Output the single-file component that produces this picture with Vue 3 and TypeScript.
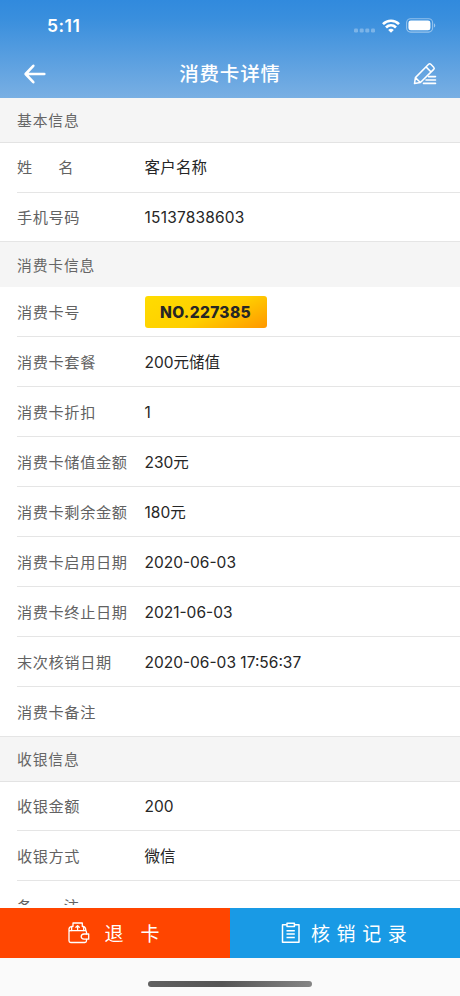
<script setup lang="ts">
interface Field {
  label: string
  value?: string
  kind?: 'badge' | 'wide'
  split?: 'name' | 'note'
}
interface Section {
  id: string
  title: string
  fields: Field[]
}

const sections: Section[] = [
  {
    id: 'basic',
    title: '基本信息',
    fields: [
      { label: '姓名', value: '客户名称', split: 'name', kind: 'wide' },
      { label: '手机号码', value: '15137838603', kind: 'wide' },
    ],
  },
  {
    id: 'card',
    title: '消费卡信息',
    fields: [
      { label: '消费卡号', value: 'NO.227385', kind: 'badge' },
      { label: '消费卡套餐', value: '200元储值' },
      { label: '消费卡折扣', value: '1' },
      { label: '消费卡储值金额', value: '230元' },
      { label: '消费卡剩余金额', value: '180元' },
      { label: '消费卡启用日期', value: '2020-06-03' },
      { label: '消费卡终止日期', value: '2021-06-03' },
      { label: '末次核销日期', value: '2020-06-03 17:56:37' },
      { label: '消费卡备注' },
    ],
  },
  {
    id: 'cashier',
    title: '收银信息',
    fields: [
      { label: '收银金额', value: '200' },
      { label: '收银方式', value: '微信' },
      { label: '备注', split: 'note' },
    ],
  },
]
</script>

<template>
  <div class="screen">
    <header class="top">
      <div class="status">
        <span class="time">5:11</span>
        <div class="indicators">
          <svg class="dots" width="21" height="5" viewBox="0 0 21 5" fill="#fff" fill-opacity=".3">
            <rect x="0" y="0.5" width="4" height="4" rx="1.2" />
            <rect x="5.7" y="0.5" width="4" height="4" rx="1.2" />
            <rect x="11.3" y="0.5" width="4" height="4" rx="1.2" />
            <rect x="17" y="0.5" width="4" height="4" rx="1.2" />
          </svg>
          <svg class="wifi" width="18" height="14" viewBox="0 0 18 14" fill="none" stroke="#fff" stroke-width="2.7">
            <path d="M1 5.1C5.6.6 12.4.6 17 5.1" />
            <path d="M4 8.5c2.9-2.8 7.1-2.8 10 0" />
            <path d="M9 13.7 6.2 10.9c1.6-1.5 4-1.5 5.6 0z" fill="#fff" stroke="none" />
          </svg>
          <svg class="battery" width="30" height="15" viewBox="0 0 30 15">
            <rect x="0.6" y="0.7" width="26" height="13.4" rx="4" fill="none" stroke="#fff" stroke-opacity=".45" stroke-width="1.1" />
            <rect x="2.4" y="2.5" width="22" height="9.8" rx="2.4" fill="#fff" />
            <path d="M28 5.2c1.7.7 1.7 3.7 0 4.4z" fill="#fff" fill-opacity=".5" />
          </svg>
        </div>
      </div>
      <nav class="nav">
        <svg class="back" width="24" height="22" viewBox="0 0 24 22" fill="none" stroke="#fff" stroke-width="2.6" stroke-linecap="round" stroke-linejoin="round">
          <path d="M10.3 2.8 2.6 11l7.7 8.2M2.8 11h18.500" />
        </svg>
        <h1>消费卡详情</h1>
        <svg class="edit" width="24" height="24" viewBox="0 0 24 24" fill="none" stroke="#fff" stroke-width="1.5" stroke-linejoin="round" stroke-linecap="round">
          <path d="M1.5 21.5 2.4 15.6 15.6 2.3Q16.7 1.2 17.8 2.3L20.7 5.2Q21.8 6.3 20.7 7.4L7.4 20.5ZM2.4 15.6 7.4 20.5M13 4.9l5.100 5.100" />
          <path d="M15.5 14.6h7M13 18h9.5M10.5 21.4h12" stroke-width="1.6" />
        </svg>
      </nav>
    </header>

    <main class="content">
      <section v-for="s in sections" :key="s.id" :class="['section', s.id]">
        <h2>{{ s.title }}</h2>
        <dl>
          <div v-for="f in s.fields" :key="f.label" class="row">
            <dt :class="f.split"><template v-if="f.split"><span>{{ f.label[0] }}</span><span>{{ f.label[1] }}</span></template><template v-else>{{ f.label }}</template></dt>
            <dd><span v-if="f.value" :class="f.kind">{{ f.value }}</span></dd>
          </div>
        </dl>
      </section>
    </main>

    <footer class="bottom">
      <div class="actions">
        <button class="refund">
          <svg width="22" height="22" viewBox="0 0 22 22" fill="none" stroke="#fff" stroke-width="1.3" stroke-linejoin="round" stroke-linecap="round">
            <path d="M18.5 12V10Q18.5 8.6 17 8.6H2.6Q1 8.6 1 10V18.8Q1 20.5 2.7 20.5H16.8Q18.5 20.5 18.5 18.8V17.5M1 10V7.3Q1 4.8 3.6 4.6M15.7 4.6Q17.8 5 17.8 8.6" />
            <path d="M3.6 8.5V4.5H5V1H14.3V4.5H15.7V8.5M9.6 7.6V3.8M7.9 5.3 9.6 3.6 11.3 5.3" />
            <path d="M20.7 12H16Q13.2 12.2 13.2 14.6T16 17.2H20.7Z" />
          </svg>
          <span>退<i></i>卡</span>
        </button>
        <button class="record">
          <svg width="20" height="22" viewBox="0 0 20 22" fill="none" stroke="#fff" stroke-width="1.5" stroke-linejoin="round">
            <path d="M5.8 2.8H1.5V20.2H18V2.8H13.5" />
            <path d="M6 1.2H13.4V4.5H6ZM5.5 8.8H13.8M5.5 12.1H13.8M5.5 15.4H13.8" />
          </svg>
          <span>核销记录</span>
        </button>
      </div>
      <div class="home"><span></span></div>
    </footer>
  </div>
</template>

<style>
body {
  margin: 0;
  overflow: hidden;
}
</style>

<style scoped>
.screen {
  display: flex;
  flex-direction: column;
  width: 460px;
  height: 996px;
  overflow: hidden;
  background: #fff;
  color: #262626;
  font-family: Inter, "Noto Sans CJK SC", sans-serif;
}
.top {
  flex: none;
  height: 98px;
  background: linear-gradient(#318add 0%, #3a8fdd 20%, #79afe3 100%);
  color: #fff;
}
.status {
  display: flex;
  justify-content: space-between;
  align-items: center;
  height: 51px;
  padding: 0 24px 0 47px;
}
.time {
  font-size: 17.5px;
  font-weight: 600;
  line-height: 20px;
  letter-spacing: 0.5px;
}
.indicators {
  display: flex;
  align-items: center;
}
.dots {
  margin: 9px 7px 0 0;
}
.wifi {
  margin-right: 6px;
}
.nav {
  display: grid;
  grid-template-columns: 60px 1fr 60px;
  align-items: center;
  height: 45px;
}
.back {
  margin-left: 23px;
}
.edit {
  margin-left: 13px;
}
h1 {
  margin: 0;
  text-align: center;
  font-size: 19.5px;
  font-weight: 500;
  line-height: 30px;
  letter-spacing: 0.8px;
}
.content {
  flex: none;
  height: 807px;
  overflow: hidden;
}
h2 {
  box-sizing: border-box;
  height: 45px;
  margin: 0;
  padding: 1px 17px 0;
  border-bottom: 1px solid #e3e3e3;
  background: #f5f5f5;
  color: #666;
  font-size: 14.8px;
  font-weight: 400;
  line-height: 44px;
  letter-spacing: 0.85px;
}
.card h2 {
  padding-top: 2px;
  border-bottom-color: #f5f5f5;
}
dl {
  margin: 0;
}
.row {
  display: flex;
  align-items: center;
  box-sizing: border-box;
  height: 50px;
  margin-left: 17px;
  padding-top: 2px;
  border-bottom: 1px solid #e5e5e5;
}
.basic .row:first-of-type {
  padding-top: 1px;
}
.row:last-child {
  margin-left: 0;
  padding-left: 17px;
}
.basic .row:last-child {
  height: 49px;
}
.cashier .row:first-of-type {
  height: 49px;
}
dt {
  display: flex;
  width: 127.5px;
  color: #626262;
  font-size: 15.2px;
  letter-spacing: 0.6px;
  line-height: 24px;
}
dt.name {
  gap: 25.5px;
}
dt.note {
  gap: 31px;
}
dd {
  margin: 0;
  font-size: 15.5px;
  line-height: 24px;
}
.wide {
  letter-spacing: 0.2px;
}
.badge {
  display: block;
  box-sizing: border-box;
  width: 122px;
  height: 32px;
  margin-bottom: 2px;
  border-radius: 3px;
  background: linear-gradient(155deg, #ffdc00 0%, #ffcf00 55%, #ff9700 100%);
  text-align: center;
  font-weight: 800;
  line-height: 33px;
  letter-spacing: 0.35px;
}
.bottom {
  flex: none;
  background: #fafafa;
}
.actions {
  display: grid;
  grid-template-columns: 1fr 1fr;
  border-top: 3px solid #fff;
}
button {
  display: flex;
  align-items: center;
  height: 50px;
  margin: 0;
  border: 0;
  color: #fff;
  font: 400 19px/30px "Noto Sans CJK SC", sans-serif;
}
.refund {
  gap: 14.5px;
  padding: 0 0 0 68px;
  background: #ff4500;
}
.refund i {
  display: inline-block;
  width: 17px;
}
.record {
  gap: 10px;
  padding: 0 0 0 51px;
  background: #199ae5;
}
.record span {
  letter-spacing: 6.6px;
}
.home {
  display: flex;
  justify-content: center;
  height: 38px;
  padding-top: 23px;
  box-sizing: border-box;
}
.home span {
  width: 164px;
  height: 6px;
  border-radius: 3px;
  background: linear-gradient(90deg, #606060, #555 45%, #858585);
}
</style>
